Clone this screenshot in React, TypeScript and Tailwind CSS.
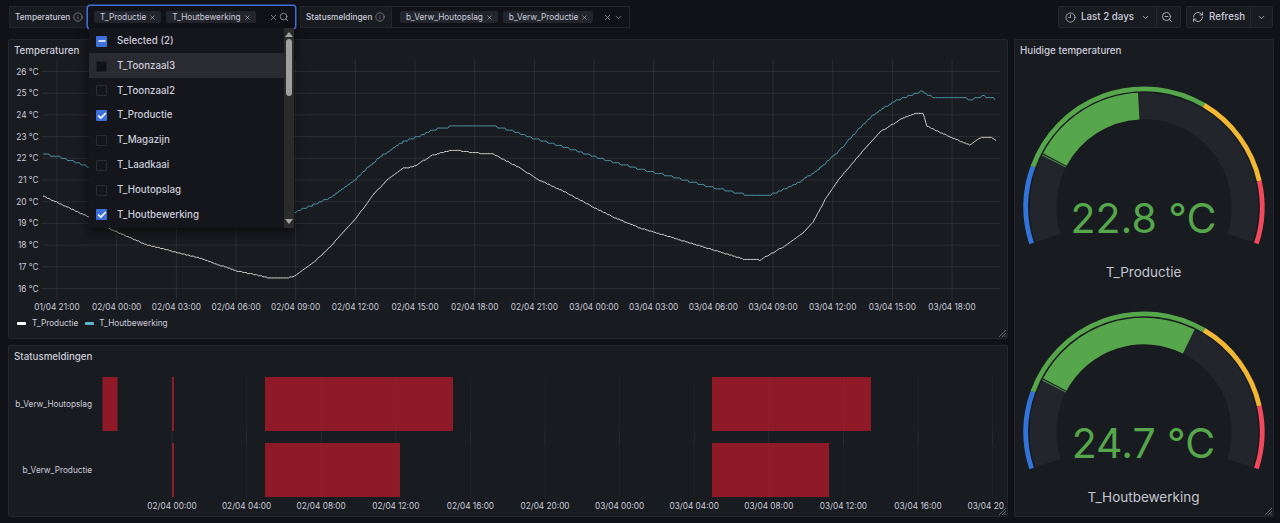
import React from "react";
import { Check, ChevronDown, Clock9, Info, Minus, RefreshCw, Search, X, ZoomOut } from "lucide-react";

const yTicks = [26, 25, 24, 23, 22, 21, 20, 19, 18, 17, 16];
const xTicks = [
  "01/04 21:00", "02/04 00:00", "02/04 03:00", "02/04 06:00", "02/04 09:00", "02/04 12:00", "02/04 15:00", "02/04 18:00",
  "02/04 21:00", "03/04 00:00", "03/04 03:00", "03/04 06:00", "03/04 09:00", "03/04 12:00", "03/04 15:00", "03/04 18:00",
];
const timelineTicks = [
  "02/04 00:00", "02/04 04:00", "02/04 08:00", "02/04 12:00", "02/04 16:00", "02/04 20:00",
  "03/04 00:00", "03/04 04:00", "03/04 08:00", "03/04 12:00", "03/04 16:00",
];

const teal: [number, number][] = [
  [43, 154], [60, 157], [89, 167], [293, 213], [313, 205], [330, 198], [357, 178], [373, 163], [383, 155], [403, 142], [417, 137], [433, 130],
  [453, 126], [493, 126], [513, 131], [533, 138], [567, 148], [593, 156], [613, 162], [640, 169], [657, 173], [677, 178], [707, 186], [737, 193],
  [753, 196], [768, 196], [787, 188], [803, 180], [820, 168], [840, 150], [853, 135], [873, 115], [893, 102], [917, 93], [923, 91], [928, 96],
  [940, 98], [965, 98], [970, 100], [983, 96], [996, 99],
];
const white: [number, number][] = [
  [43, 196], [89, 217], [110, 229], [147, 245], [200, 258], [213, 263], [237, 271], [257, 275], [270, 278], [287, 278], [295, 276], [313, 263],
  [330, 247], [357, 217], [373, 195], [387, 180], [403, 168], [413, 167], [433, 155], [453, 150], [477, 153], [493, 154], [520, 168], [537, 179],
  [567, 193], [593, 207], [613, 217], [640, 228], [657, 233], [677, 239], [707, 248], [730, 255], [743, 259], [760, 260], [783, 247], [803, 233],
  [813, 222], [825, 200], [840, 178], [862, 152], [880, 132], [903, 118], [917, 113], [923, 113], [927, 126], [950, 137], [970, 145], [980, 138],
  [990, 137], [997, 141],
];

function stepped(points: [number, number][], step: number) {
  const out: string[] = [];
  for (let i = 0; i < points.length - 1; i++) {
    const [x1, y1] = points[i];
    const [x2, y2] = points[i + 1];
    for (let x = x1; x < x2; x += 1.5) {
      const y = y1 + ((y2 - y1) * (x - x1)) / (x2 - x1);
      out.push(`${x},${Math.round(y / step) * step}`);
    }
  }
  return out.join(" ");
}

function polar(cx: number, cy: number, r: number, deg: number) {
  const a = ((deg - 90) * Math.PI) / 180;
  return [cx + r * Math.cos(a), cy + r * Math.sin(a)];
}

function arc(cx: number, cy: number, r: number, from: number, to: number) {
  const [x1, y1] = polar(cx, cy, r, from);
  const [x2, y2] = polar(cx, cy, r, to);
  return `M${x1} ${y1}A${r} ${r} 0 ${to - from > 180 ? 1 : 0} 1 ${x2} ${y2}`;
}

function Gauge({ value, end, name, height }: { value: string; end: number; name: string; height: string }) {
  const c = 130;
  const cy = 124;
  return (
    <div className={`flex flex-col items-center ${height}`}>
      <svg width="260" height="170" viewBox="0 0 260 170" className="shrink-0">
        <path d={arc(c, cy, 118.2, -108, -70)} fill="none" stroke="#3274d9" strokeWidth="4.8" />
        <path d={arc(c, cy, 118.2, -70, 30.5)} fill="none" stroke="#56a64b" strokeWidth="4.8" />
        <path d={arc(c, cy, 118.2, 30.5, 77.3)} fill="none" stroke="#f2b733" strokeWidth="4.8" />
        <path d={arc(c, cy, 118.2, 77.3, 108)} fill="none" stroke="#f2495c" strokeWidth="4.8" />
        <path d={arc(c, cy, 101, -108, 108)} fill="none" stroke="#22252b" strokeWidth="26.6" />
        <path d={arc(c, cy, 101, -62, end)} fill="none" stroke="#56a64b" strokeWidth="26.6" />
        <path d={arc(c, cy, 101, -63.2, -62.6)} fill="none" stroke="#56a64b" strokeWidth="26.6" opacity="0.8" />
      </svg>
      <div className="mt-[-60px] text-[41px] leading-[50px] text-[#56a64b] font-normal">{value}</div>
      <div className="mt-[20px] text-[13.5px] leading-[18px] text-[#c4c5d2]">{name}</div>
    </div>
  );
}

function Chip({ label }: { label: string }) {
  return (
    <span className="flex items-center h-[12px] rounded-[2px] bg-[#22252b] pl-[6px] pr-[5px] gap-[3px] text-[8.25px] leading-none text-[#ccccdc]">
      {label}
      <X size={7} strokeWidth={2} className="text-[#c0c1cd]" />
    </span>
  );
}

function Label({ text, width }: { text: string; width: string }) {
  return (
    <div className={`flex items-center gap-[3px] h-[22px] ${width} pl-[5px] bg-[#181b1f] border border-[#24262c] text-[8.25px] font-medium text-[#ccccdc]`}>
      {text}
      <Info size={10} strokeWidth={1.5} className="text-[#a0a1ac]" />
    </div>
  );
}

function Row({ label, state, active }: { label: string; state?: "on" | "some"; active?: boolean }) {
  return (
    <div className={`flex items-center h-[24.8px] pt-[2px] pl-[7px] gap-[10px] text-[9.75px] font-medium text-[#ccccdc] ${active ? "bg-[#2a2b30]" : ""}`}>
      <span className={`flex items-center justify-center w-[11px] h-[11px] rounded-[1px] ${state ? "bg-[#3d71d9]" : active ? "bg-[#111217] border border-[#1f2025]" : "border border-[#2a2c32]"}`}>
        {state === "on" && <Check size={10} strokeWidth={4} className="text-white" />}
        {state === "some" && <Minus size={10} strokeWidth={4} className="text-white" />}
      </span>
      {label}
    </div>
  );
}

function Dropdown() {
  return (
    <div className="absolute left-[1px] top-[22px] z-10 flex w-[205px] h-[200px] bg-[#14161b] shadow-[0_4px_10px_rgba(0,0,0,0.6)]">
      <div className="flex-1">
        <Row label="Selected (2)" state="some" />
        <Row label="T_Toonzaal3" active />
        <Row label="T_Toonzaal2" />
        <Row label="T_Productie" state="on" />
        <Row label="T_Magazijn" />
        <Row label="T_Laadkaai" />
        <Row label="T_Houtopslag" />
        <Row label="T_Houtbewerking" state="on" />
      </div>
      <div className="flex flex-col items-center w-[10px] bg-[#2b2b2b]">
        <span className="mt-[4px] w-0 h-0 border-x-[4px] border-x-transparent border-b-[5px] border-b-[#a3a3a3]" />
        <span className="mt-[2px] w-[6px] h-[57px] rounded-[3px] bg-[#9f9f9f]" />
        <span className="mt-auto mb-[4px] w-0 h-0 border-x-[4px] border-x-transparent border-t-[5px] border-t-[#a3a3a3]" />
      </div>
    </div>
  );
}

function TopBar() {
  return (
    <div className="flex items-center h-[24px] mt-[5px] pl-[9px] pr-[7px]">
      <Label text="Temperaturen" width="w-[78px]" />
      <div className="relative flex items-center w-[209px] h-[24px] rounded-[3px] border border-[#3d71d9] shadow-[0_0_0_0.5px_#3d71d9] bg-[#111217] pl-[6px] gap-[5px]">
        <Chip label="T_Productie" />
        <Chip label="T_Houtbewerking" />
        <X size={9} className="absolute left-[181px] text-[#9a9ba6]" />
        <Search size={10} className="absolute left-[191px] text-[#9a9ba6]" />
        <Dropdown />
      </div>
      <div className="w-[4px]" />
      <Label text="Statusmeldingen" width="w-[92px]" />
      <div className="relative flex items-center w-[238px] h-[22px] border border-l-0 border-[#24262c] bg-[#111217] pl-[8px] gap-[5px]">
        <Chip label="b_Verw_Houtopslag" />
        <Chip label="b_Verw_Productie" />
        <X size={9} className="absolute left-[211px] text-[#9a9ba6]" />
        <ChevronDown size={9} className="absolute left-[222px] text-[#9a9ba6]" />
      </div>
      <div className="ml-auto flex items-center h-[22px] w-[123px] rounded-[2px] bg-[#181b1f] border border-[#24262c] text-[9.75px] font-medium text-[#ccccdc]">
        <Clock9 size={11} strokeWidth={1.6} className="ml-[6px] text-[#ccccdc]" />
        <span className="ml-[5px]">Last 2 days</span>
        <ChevronDown size={9} className="ml-[7px]" />
        <span className="ml-[6px] h-[20px] w-px bg-[#24262c]" />
        <ZoomOut size={12} strokeWidth={1.6} className="ml-[4px]" />
      </div>
      <div className="ml-[5px] flex items-center h-[22px] w-[87px] rounded-[2px] bg-[#181b1f] border border-[#24262c] text-[9.75px] font-medium text-[#ccccdc]">
        <RefreshCw size={12} strokeWidth={1.6} className="ml-[5px]" />
        <span className="ml-[5px]">Refresh</span>
        <span className="ml-[5px] h-[20px] w-px bg-[#24262c]" />
        <ChevronDown size={9} className="ml-[6px]" />
      </div>
    </div>
  );
}

function ResizeHandle() {
  return (
    <svg width="8" height="8" viewBox="0 0 8 8" className="absolute right-[1px] bottom-[1px]">
      <path d="M1 8L8 1M4 8L8 4M6.500 8L8 6.500" stroke="#7b7c86" strokeWidth="0.8" />
    </svg>
  );
}

function TemperatureChart() {
  return (
    <div className="relative flex flex-col h-[300px] rounded-[2px] bg-[#181b1f] border border-[#24262c]">
      <div className="h-[20px] pl-[5px] pt-[4px] text-[9.75px] leading-[13px] font-medium text-[#ccccdc]">Temperaturen</div>
      <svg width="998" height="255" viewBox="9 60 998 255" className="shrink-0">
        {yTicks.map((t, i) => {
          const y = 71.5 + i * 21.7;
          return (
            <g key={t}>
              <line x1="42" x2="1000" y1={y} y2={y} stroke="#ccccdc" strokeOpacity="0.1" />
              <text x="38.500" y={y + 3} textAnchor="end" fontSize="8.25" fill="#ccccdc">{t} °C</text>
            </g>
          );
        })}
        {xTicks.map((t, i) => {
          const x = 57 + i * 59.67;
          return (
            <g key={i}>
              <line x1={x} x2={x} y1="60" y2="300" stroke="#ccccdc" strokeOpacity="0.1" />
              <text x={x} y="310" textAnchor="middle" fontSize="8.25" fill="#ccccdc">{t}</text>
            </g>
          );
        })}
        <polyline points={stepped(teal, 2.17)} fill="none" stroke="#4c93a8" strokeWidth="1" />
        <polyline points={stepped(white, 1.09)} fill="none" stroke="#d0ccca" strokeWidth="1" />
      </svg>
      <div className="flex items-center h-[16px] pl-[8px] text-[8.25px] text-[#ccccdc]">
        <span className="w-[9px] h-[3px] rounded-[1px] bg-white" />
        <span className="ml-[6px]">T_Productie</span>
        <span className="ml-[7px] w-[9px] h-[3px] rounded-[1px] bg-[#5bb6d0]" />
        <span className="ml-[5px]">T_Houtbewerking</span>
      </div>
      <ResizeHandle />
    </div>
  );
}

function StatusTimeline() {
  const red = "#8f1927";
  return (
    <div className="relative flex flex-col h-[172px] rounded-[2px] bg-[#181b1f] border border-[#24262c]">
      <div className="h-[20px] pl-[5px] pt-[4px] text-[9.75px] leading-[13px] font-medium text-[#ccccdc]">Statusmeldingen</div>
      <svg width="998" height="150" viewBox="9 366 998 150" className="shrink-0">
        <text x="92" y="407" textAnchor="end" fontSize="8.25" fill="#ccccdc">b_Verw_Houtopslag</text>
        <text x="92" y="473" textAnchor="end" fontSize="8.25" fill="#ccccdc">b_Verw_Productie</text>
        <rect x="102.500" y="377" width="15" height="54" fill={red} />
        <rect x="172" y="377" width="2" height="54" fill={red} />
        <rect x="265" y="377" width="188" height="54" fill={red} />
        <rect x="712" y="377" width="159" height="54" fill={red} />
        <rect x="172" y="443" width="2" height="54" fill={red} />
        <rect x="265" y="443" width="135" height="54" fill={red} />
        <rect x="712" y="443" width="117" height="54" fill={red} />
        {[...timelineTicks, ""].map((t, i) => {
          const x = 172 + i * 74.6;
          return (
            <g key={i}>
              <line x1={x} x2={x} y1="377" y2="498" stroke="#ccccdc" strokeOpacity="0.04" />
              <line x1={x} x2={x} y1="431" y2="443" stroke="#ccccdc" strokeOpacity="0.06" />
              <text x={x} y="509" textAnchor="middle" fontSize="8.25" fill="#ccccdc">{t}</text>
            </g>
          );
        })}
        <text x="967.500" y="509" fontSize="8.25" fill="#ccccdc">03/04 20</text>
      </svg>
      <ResizeHandle />
    </div>
  );
}

export default function App() {
  return (
    <div className="h-[523px] w-[1280px] overflow-hidden bg-[#111217] font-['Inter',sans-serif]">
      <TopBar />
      <div className="flex gap-[6px] mt-[10px] pl-[8px]">
        <div className="flex flex-col gap-[6px] w-[1000px]">
          <TemperatureChart />
          <StatusTimeline />
        </div>
        <div className="relative w-[260px] h-[478px] rounded-[2px] bg-[#181b1f] border border-[#24262c]">
          <div className="h-[20px] pl-[5px] pt-[4px] text-[9.75px] leading-[13px] font-medium text-[#ccccdc]">Huidige temperaturen</div>
          <div className="flex flex-col -ml-px pt-[23px]">
            <Gauge value="22.8 °C" end={-3} name="T_Productie" height="h-[225px]" />
            <Gauge value="24.7 °C" end={26.3} name="T_Houtbewerking" height="h-[220px]" />
          </div>
          <ResizeHandle />
        </div>
      </div>
    </div>
  );
}
